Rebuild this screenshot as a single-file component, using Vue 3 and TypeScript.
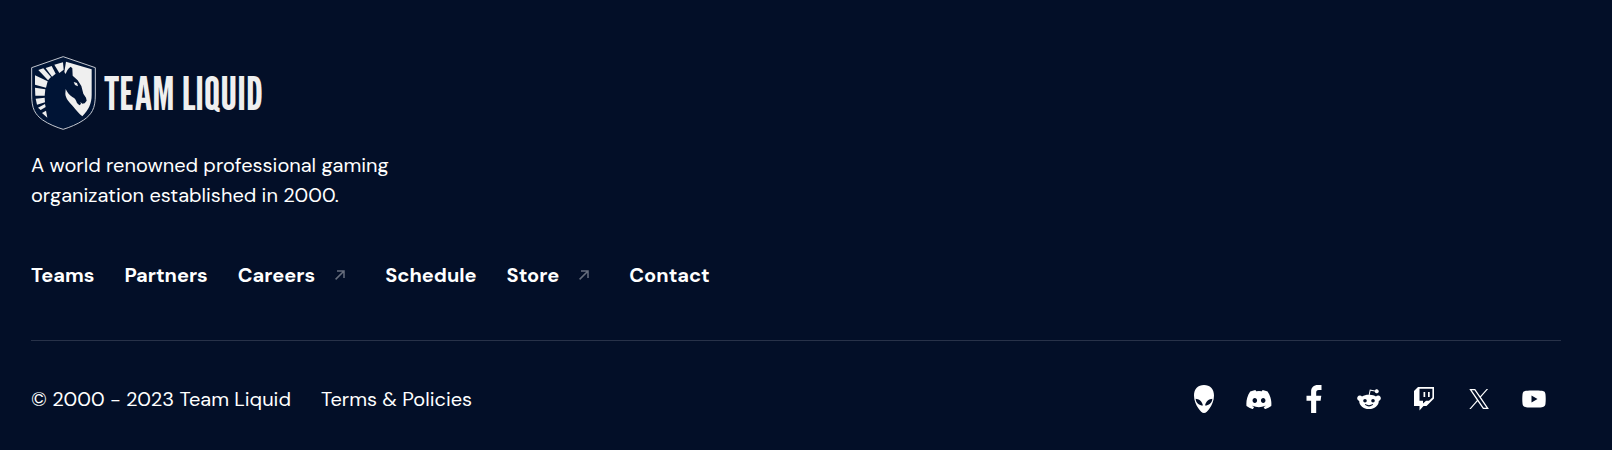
<script setup lang="ts">
interface NavItem {
  label: string
  external?: boolean
}

interface SocialItem {
  name: string
  width: number
  height: number
  box: string
  path: string
}

const navItems: NavItem[] = [
  { label: 'Teams' },
  { label: 'Partners' },
  { label: 'Careers', external: true },
  { label: 'Schedule' },
  { label: 'Store', external: true },
  { label: 'Contact' },
]

const socials: SocialItem[] = [
  {
    name: 'Alienware Arena',
    width: 20,
    height: 28,
    box: '0 0 20 28',
    path: 'M10 0C4 0 0 4 0 10.500C0 15.500 2 20 4.500 23.500C6.300 26.200 8 28 10 28C12 28 13.700 26.200 15.500 23.500C18 20 20 15.500 20 10.500C20 4 16 0 10 0ZM1.600 13.800C4.800 14 8.200 16.200 8.900 20.600C5.200 20.600 2 18.200 1.600 13.800ZM18.400 13.800C18 18.200 14.800 20.600 11.100 20.600C11.800 16.200 15.200 14 18.400 13.800Z',
  },
  {
    name: 'Discord',
    width: 26,
    height: 20,
    box: '0 2 24 19',
    path: 'M20.317 4.370a19.791 19.791 0 0 0-4.885-1.515.074.074 0 0 0-.079.037c-.211.375-.445.865-.608 1.250a18.270 18.270 0 0 0-5.487 0 12.640 12.640 0 0 0-.617-1.250.077.077 0 0 0-.079-.037A19.736 19.736 0 0 0 3.677 4.370a.07.07 0 0 0-.032.027C.533 9.046-.320 13.580.099 18.058a.082.082 0 0 0 .031.056 19.900 19.900 0 0 0 5.993 3.030c.462-.630.874-1.295 1.226-1.994a13.100 13.100 0 0 1-1.872-.892c.126-.094.252-.192.372-.291 3.928 1.793 8.180 1.793 12.062 0l.373.292a12.300 12.300 0 0 1-1.873.892c.360.698.772 1.362 1.225 1.993a19.840 19.840 0 0 0 6.002-3.030.077.077 0 0 0 .032-.054c.500-5.177-.838-9.674-3.549-13.660a.061.061 0 0 0-.031-.030zM8.020 15.330c-1.183 0-2.157-1.085-2.157-2.419 0-1.333.956-2.419 2.157-2.419 1.210 0 2.176 1.096 2.157 2.420 0 1.333-.956 2.418-2.157 2.418zm7.975 0c-1.183 0-2.157-1.085-2.157-2.419 0-1.333.955-2.419 2.157-2.419 1.210 0 2.176 1.096 2.157 2.420 0 1.333-.946 2.418-2.157 2.418z',
  },
  {
    name: 'Facebook',
    width: 16,
    height: 28,
    box: '0 0 16 28',
    path: 'M15.500 0V5H12.700C10.700 5 10.200 6 10.200 7.500V10.800H15.300L14.600 15.700H10.200V28H5.100V15.700H0.500V10.800H5.100V6.800C5.100 2.300 7.800 0 11.800 0Z',
  },
  {
    name: 'Reddit',
    width: 24,
    height: 20,
    box: '0 0 24 20',
    path: 'M11.700 5.800L12.800 0.600L18 1.400A2 2 0 1 1 17.800 2.500L13.600 1.800L12.700 5.800C15.200 5.900 17.400 6.600 19 7.600A2.700 2.700 0 1 1 21.800 11.900C21.800 16.500 17.500 20 12 20S2.200 16.500 2.200 11.900A2.700 2.700 0 1 1 5 7.600C6.900 6.400 9.200 5.800 11.700 5.800ZM8 10A1.800 1.800 0 1 0 8 13.600A1.800 1.800 0 1 0 8 10ZM16 10A1.800 1.800 0 1 0 16 13.600A1.800 1.800 0 1 0 16 10ZM7.800 15.600C9.800 18 14.200 18 16.200 15.600L15.400 15.100C13.700 16.600 10.300 16.600 8.600 15.100Z',
  },
  {
    name: 'Twitch',
    width: 20,
    height: 24,
    box: '0 0 20 24',
    path: 'M4 0H20V11.500L12.500 19H9.500L5.500 23.500V19H0V4ZM5.500 1.700V13.700H9V16.500L12 13.700H15L18.400 10.500V1.700ZM9.500 5H11.200V10H9.500ZM14 5H15.700V10H14Z',
  },
  {
    name: 'X',
    width: 20,
    height: 20,
    box: '0 0 20 20',
    path: 'M0.300 0H6.200L11.200 7.200L17.600 0H19.100L11.900 8.200L19.900 20H14L8.600 12.200L1.800 20H0.300L7.900 11.200ZM2.700 1.200L14.700 18.800H17.500L5.500 1.200Z',
  },
  {
    name: 'YouTube',
    width: 24,
    height: 18,
    box: '0 0 24 18',
    path: 'M4 0.800C8 0.300 16 0.300 20 0.800C22.500 1.100 23.300 2.200 23.500 4.500C23.800 7.500 23.800 10.500 23.500 13.500C23.300 15.800 22.500 16.900 20 17.200C16 17.700 8 17.700 4 17.200C1.500 16.900 0.700 15.800 0.500 13.500C0.200 10.500 0.200 7.500 0.500 4.500C0.700 2.200 1.500 1.100 4 0.800ZM9.500 5.500V12.500L15.500 9Z',
  },
]
</script>

<template>
  <footer class="footer">
    <a class="brand" href="#" aria-label="Team Liquid home">
      <svg class="shield" viewBox="33 32 195 222" aria-hidden="true">
        <path class="plate" d="M129.500 34L226 67V149C226 190 215 207 191 224C172 237 149 246 129.500 252C110 246 87 237 68 224C45 207 35 190 35 149V67Z" />
        <path class="light" d="M138 49L215 72V148C215 174 207 192 187 213C177 205 168 193 160 184C148 171 137 160 136 146L137 131C142 142 149 150 157 155C165 158 168 165 171 173L178 180L183 176L181 170L187 175L194 174L200 166L198 157L190 145L184 122L173 105L158 91L157 69L152 64C144 70 140 77 137 86L133 80Z" />
        <path class="light" d="M161 110L171 113L174 123L165 119Z" />
        <path class="light" d="M129 51L131 73L118 83L103 58Z" />
        <path class="light" d="M95 62L107 85L96 94L77 68Z" />
        <path class="light" d="M70 69L93 95L84 105L55 74Z" />
        <path class="light" d="M45 90L83 108L78 127L45 118Z" />
        <path class="light" d="M45 127L76 132L74 151L46 151Z" />
        <path class="light" d="M47 160L74 157L75 171L51 178Z" />
        <path class="light" d="M54 187L75 176L77 185L62 194Z" />
        <path class="light" d="M66 203L78 196L82 217Z" />
      </svg>
      <span class="wordmark">TEAM LIQUID</span>
    </a>

    <p class="tagline">A world renowned professional gaming organization established in 2000.</p>

    <nav class="nav" aria-label="Footer">
      <a v-for="item in navItems" :key="item.label" class="nav-link" href="#">
        {{ item.label }}
        <svg v-if="item.external" class="arrow" viewBox="0 0 10 10" aria-hidden="true">
          <path d="M0.600 9.400L9 1M2 1H9V8" />
        </svg>
      </a>
    </nav>

    <div class="bottom">
      <div class="legal">
        <span>© 2000 - 2023 Team Liquid</span>
        <a href="#">Terms &amp; Policies</a>
      </div>
      <div class="socials">
        <a v-for="item in socials" :key="item.name" class="social" href="#" :aria-label="item.name">
          <svg :width="item.width" :height="item.height" :viewBox="item.box" aria-hidden="true">
            <path fill-rule="evenodd" :d="item.path" />
          </svg>
        </a>
      </div>
    </div>
  </footer>
</template>

<style>
body {
  background: #030f28;
}
</style>

<style scoped>
.footer {
  padding: 56px 51px 20px 31px;
  background: #030f28;
  color: #fff;
  font-family: "DM Sans", Inter, "Liberation Sans", sans-serif;
  font-size: 20px;
  line-height: 30px;
}

a {
  color: inherit;
  text-decoration: none;
}

.brand {
  display: flex;
  width: fit-content;
  align-items: center;
  gap: 8px;
}

.shield {
  width: 65px;
  height: 74px;
}

.plate {
  fill: #001435;
  stroke: #c3c7cf;
  stroke-width: 3;
}

.light {
  fill: #efefef;
}

.wordmark {
  color: #efefef;
  font-family: "League Gothic", "Roboto Condensed", "Liberation Sans", sans-serif;
  font-size: 46px;
}

.tagline {
  max-width: 380px;
  margin: 20px 0 0;
}

.nav {
  display: flex;
  gap: 30px;
  margin-top: 50px;
  font-weight: 700;
}

.nav-link {
  display: flex;
  align-items: center;
}

.arrow {
  width: 10px;
  height: 10px;
  margin: 0 10px 0 20px;
  fill: none;
  stroke: #676e7d;
  stroke-width: 1.5;
}

.bottom {
  display: flex;
  align-items: center;
  justify-content: space-between;
  margin-top: 50px;
  padding-top: 43px;
  border-top: 1px solid #283249;
}

.legal {
  display: flex;
  gap: 30px;
}

.socials {
  display: flex;
}

.social {
  display: flex;
  width: 55px;
  height: 30px;
  align-items: center;
  justify-content: center;
}

.social svg {
  fill: #fff;
}
</style>
